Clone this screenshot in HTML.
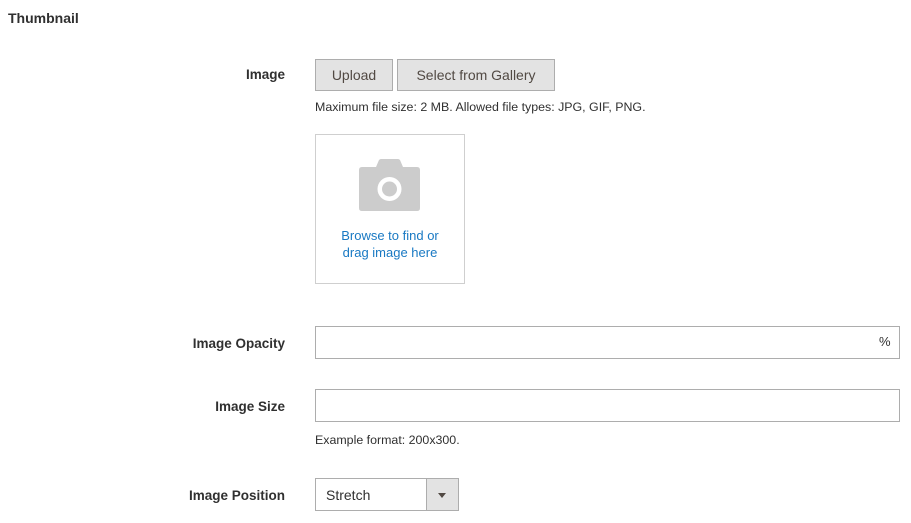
<!DOCTYPE html>
<html><head><style>
body{margin:0;width:911px;height:523px;background:#fff;font-family:"Liberation Sans",sans-serif;color:#303030;position:relative;overflow:hidden}
.a{position:absolute}
.lbl{font-weight:bold;font-size:13.5px;color:#303030;text-align:right;width:285px;left:0}
.btn{background:#e3e3e3;border:1px solid #adadad;font-size:14px;color:#514943;box-sizing:border-box;height:32px;line-height:30px;text-align:center}
.inp{border:1px solid #adadad;box-sizing:border-box;background:#fff}
.note{font-size:12.4px;color:#303030}
</style></head><body>
<div class="a" style="left:8px;top:10px;font-weight:bold;font-size:14px;color:#303030">Thumbnail</div>
<div class="a lbl" style="top:67px">Image</div>
<div class="a btn" style="left:315px;top:59px;width:78px">Upload</div>
<div class="a btn" style="left:397px;top:59px;width:158px">Select from Gallery</div>
<div class="a note" style="left:315px;top:100px">Maximum file size: 2 MB. Allowed file types: JPG, GIF, PNG.</div>
<div class="a" style="left:315px;top:134px;width:150px;height:150px;box-sizing:border-box;border:1px solid #cfcfcf"></div>
<svg class="a" style="left:359px;top:159px" width="61" height="52" viewBox="0 0 61 52">
<path d="M17 8 L20 1 Q21 0 22 0 L39 0 Q40 0 41 1 L44 8 L58 8 Q61 8 61 11 L61 49 Q61 52 58 52 L3 52 Q0 52 0 49 L0 11 Q0 8 3 8 Z" fill="#cccccc"/>
<circle cx="30.5" cy="30" r="12" fill="#fff"/><circle cx="30.5" cy="30" r="7.5" fill="#cccccc"/>
</svg>
<div class="a" style="left:315px;top:227px;width:150px;text-align:center;font-size:13px;line-height:17px;color:#1979c3">Browse to find or<br>drag image here</div>
<div class="a lbl" style="top:336px">Image Opacity</div>
<div class="a inp" style="left:315px;top:326px;width:585px;height:33px"></div>
<div class="a" style="left:879px;top:334px;font-size:13px;color:#303030">%</div>
<div class="a lbl" style="top:399px">Image Size</div>
<div class="a inp" style="left:315px;top:389px;width:585px;height:33px"></div>
<div class="a note" style="left:315px;top:433px">Example format: 200x300.</div>
<div class="a lbl" style="top:488px">Image Position</div>
<div class="a inp" style="left:315px;top:478px;width:144px;height:33px"></div>
<div class="a" style="left:426px;top:479px;width:32px;height:31px;background:#e3e3e3;border-left:1px solid #adadad;box-sizing:border-box"></div>
<div class="a" style="left:438px;top:493px;width:0;height:0;border-left:4px solid transparent;border-right:4px solid transparent;border-top:5px solid #514943"></div>
<div class="a" style="left:326px;top:487px;font-size:14px;color:#303030">Stretch</div>
</body></html>
